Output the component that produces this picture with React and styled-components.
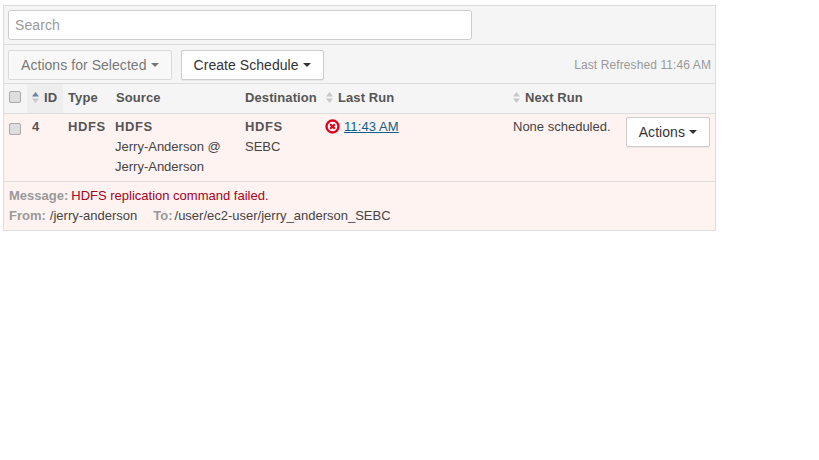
import styled, { createGlobalStyle } from 'styled-components'

const GlobalStyle = createGlobalStyle`
  html, body {
    margin: 0;
    background: #ffffff;
    font-family: "Liberation Sans", Arial, sans-serif;
    font-size: 14px;
    color: #333333;
  }
`

const Page = styled.div`
  padding: 5px 0 0 3px;
  width: 713px;
`

const Panel = styled.div`
  border: 1px solid #dddddd;
`

const SearchBar = styled.div`
  background: #f5f5f5;
  padding: 4px;
  border-bottom: 1px solid #dddddd;
`

const SearchInput = styled.input`
  display: block;
  box-sizing: border-box;
  width: 464px;
  height: 30px;
  padding: 0 6px;
  border: 1px solid #cccccc;
  border-radius: 3px;
  background: #ffffff;
  font: 14px "Liberation Sans", Arial, sans-serif;
  letter-spacing: 0.1px;
  &::placeholder {
    color: #999999;
    opacity: 1;
  }
`

const Toolbar = styled.div`
  display: flex;
  align-items: center;
  gap: 9px;
  box-sizing: border-box;
  height: 39px;
  padding: 1px 4px 0;
  background: #f5f5f5;
  border-bottom: 1px solid #dddddd;
`

const Button = styled.button`
  display: inline-flex;
  align-items: center;
  justify-content: center;
  box-sizing: border-box;
  height: 30px;
  padding: 0 12px;
  border: 1px solid #cccccc;
  border-radius: 2px;
  background: #ffffff;
  color: #333333;
  font: 14px "Liberation Sans", Arial, sans-serif;
  letter-spacing: 0.05px;
  white-space: nowrap;
  box-shadow: 0 1px 1px rgba(0, 0, 0, 0.06);
  &:disabled {
    opacity: 0.65;
    background: #fbfbfb;
    box-shadow: none;
  }
`

const Caret = styled.span`
  display: inline-block;
  margin-left: 4px;
  border-top: 4px solid currentColor;
  border-left: 4px solid transparent;
  border-right: 4px solid transparent;
`

const Refreshed = styled.span`
  margin-left: auto;
  font-size: 12px;
  letter-spacing: 0.1px;
  color: #999999;
`

const Table = styled.table`
  width: 100%;
  table-layout: fixed;
  border-collapse: collapse;
`

const HeadCell = styled.th`
  box-sizing: border-box;
  width: ${({ $w }) => $w}px;
  height: 29px;
  padding: 0 0 2px ${({ $pad }) => $pad || 5}px;
  background: ${({ $sorted }) => ($sorted ? '#eeeeee' : '#f5f5f5')};
  border-bottom: 1px solid #dddddd;
  color: #555555;
  font-size: 13px;
  font-weight: bold;
  letter-spacing: 0.1px;
  text-align: left;
  white-space: nowrap;
`

const Cell = styled.td`
  box-sizing: border-box;
  height: 68px;
  padding: 3px 0 0 5px;
  vertical-align: top;
  background: #fff3f1;
  border-bottom: 1px solid #dddddd;
  line-height: 20px;
  font-size: 13px;
  color: #444444;
`

const Strong = styled.div`
  font-weight: bold;
  letter-spacing: 0.6px;
  color: #555555;
`

const Check = styled.span`
  display: block;
  box-sizing: border-box;
  width: 12px;
  height: 12px;
  margin-top: ${({ $top }) => $top}px;
  border: 1px solid #a9a9a9;
  border-radius: 2px;
  background: #dedede;
`

const SortIcon = styled.svg`
  width: 7px;
  height: 11px;
  margin-right: 5px;
  vertical-align: -1px;
`

const LastRun = styled.div`
  display: flex;
  align-items: flex-start;
  gap: 4px;
`

const FailIcon = styled.svg`
  flex: none;
  width: 15px;
  height: 15px;
  margin-top: 2px;
`

const RunLink = styled.a`
  color: #0b5f8a;
  letter-spacing: 0.1px;
  text-decoration: underline;
`

const NextRun = styled.div`
  display: flex;
  justify-content: space-between;
  align-items: flex-start;
  padding-right: 5px;
`

const Message = styled.div`
  padding: 4px 5px;
  background: #fff3f1;
  font-size: 13px;
  line-height: 20px;
  color: #444444;
`

const Label = styled.b`
  color: #999999;
  margin-right: ${({ $gap }) => $gap}px;
`

const ErrorText = styled.span`
  color: #a5001e;
`

const PathTo = styled.span`
  margin-left: 16px;
`

function Sort({ active }) {
  return (
    <SortIcon viewBox="0 0 7 11">
      <path d="M3.5 0 L7 4.5 H0 Z" fill={active ? '#6b7f99' : '#c8c8c8'} />
      <path d="M3.5 11 L7 6.5 H0 Z" fill="#c8c8c8" />
    </SortIcon>
  )
}

function App() {
  return (
    <Page>
      <GlobalStyle />
      <Panel>
        <SearchBar>
          <SearchInput placeholder="Search" />
        </SearchBar>
        <Toolbar>
          <Button disabled>
            Actions for Selected<Caret />
          </Button>
          <Button>
            Create Schedule<Caret />
          </Button>
          <Refreshed>Last Refreshed 11:46 AM</Refreshed>
        </Toolbar>
        <Table>
          <thead>
            <tr>
              <HeadCell $w={23}><Check $top={0} /></HeadCell>
              <HeadCell $w={36} $sorted><Sort active />ID</HeadCell>
              <HeadCell $w={47}>Type</HeadCell>
              <HeadCell $w={130} $pad={6}>Source</HeadCell>
              <HeadCell $w={80}>Destination</HeadCell>
              <HeadCell $w={188} $pad={6}><Sort />Last Run</HeadCell>
              <HeadCell><Sort />Next Run</HeadCell>
            </tr>
          </thead>
          <tbody>
            <tr>
              <Cell><Check $top={6} /></Cell>
              <Cell><Strong>4</Strong></Cell>
              <Cell><Strong>HDFS</Strong></Cell>
              <Cell>
                <Strong>HDFS</Strong>
                Jerry-Anderson @
                <br />
                Jerry-Anderson
              </Cell>
              <Cell>
                <Strong>HDFS</Strong>
                SEBC
              </Cell>
              <Cell>
                <LastRun>
                  <FailIcon viewBox="0 0 15 15">
                    <circle cx="7.5" cy="7.5" r="6" fill="#ffffff" stroke="#e0001b" strokeWidth="2.4" />
                    <path d="M5.2 5.2 L9.8 9.8 M9.8 5.2 L5.2 9.8" stroke="#e0001b" strokeWidth="2.2" />
                  </FailIcon>
                  <RunLink href="#">11:43 AM</RunLink>
                </LastRun>
              </Cell>
              <Cell>
                <NextRun>
                  None scheduled.
                  <Button>Actions<Caret /></Button>
                </NextRun>
              </Cell>
            </tr>
          </tbody>
        </Table>
        <Message>
          <div>
            <Label $gap={3}>Message:</Label>
            <ErrorText>HDFS replication command failed.</ErrorText>
          </div>
          <div>
            <Label $gap={4}>From:</Label>/jerry-anderson
            <PathTo><Label $gap={2}>To:</Label>/user/ec2-user/jerry_anderson_SEBC</PathTo>
          </div>
        </Message>
      </Panel>
    </Page>
  )
}

export default App
